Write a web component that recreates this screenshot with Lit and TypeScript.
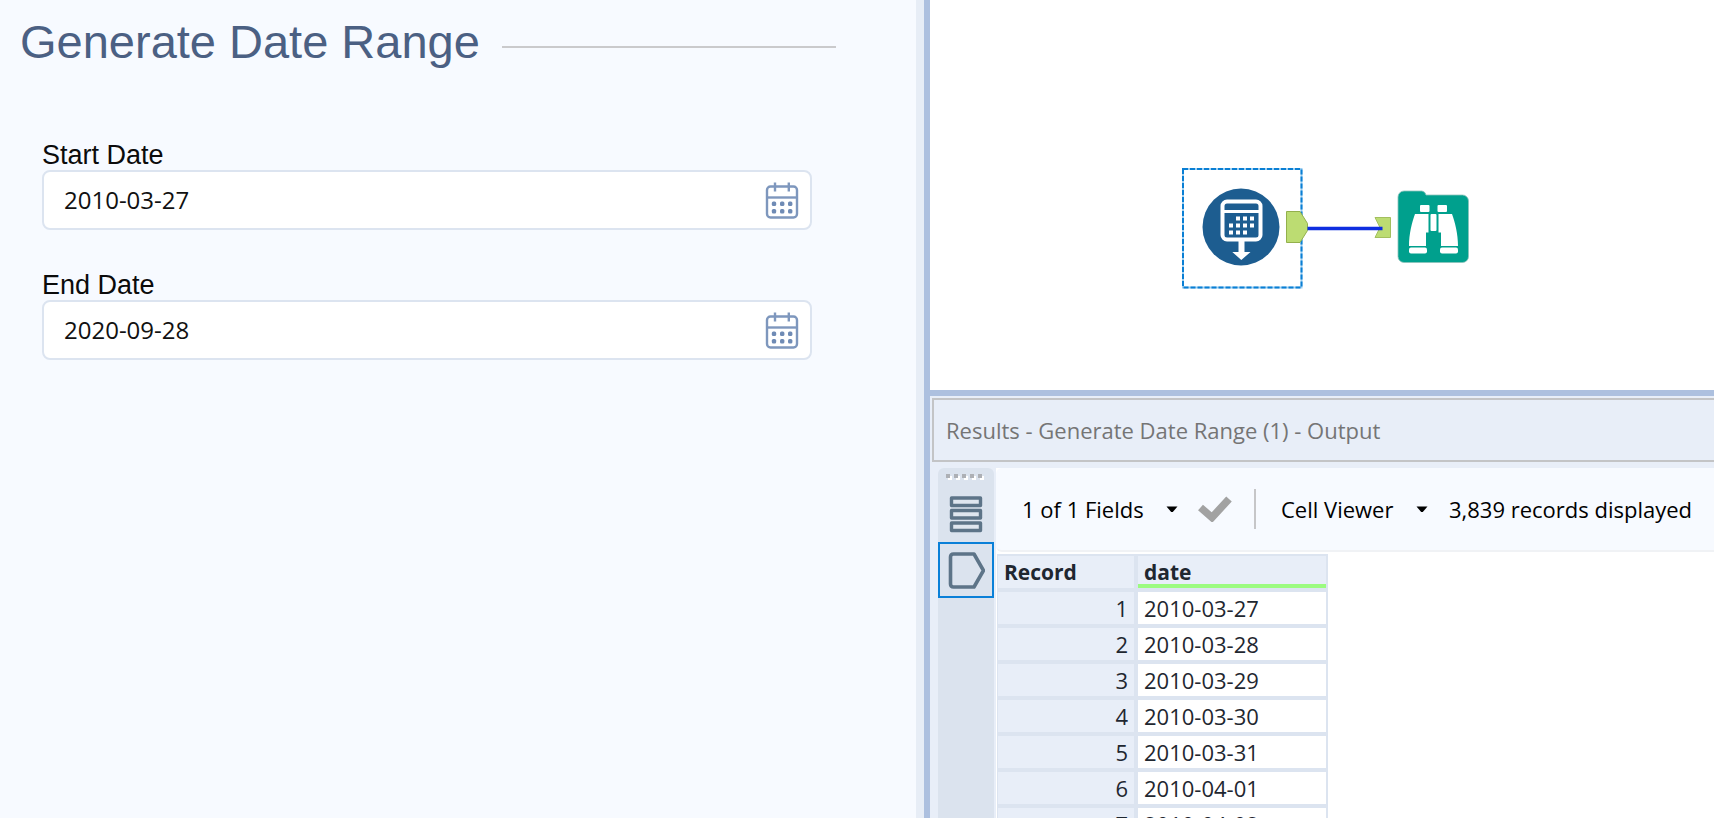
import { LitElement, html, css, svg } from "lit";
import { customElement, property } from "lit/decorators.js";

const caret = html`<svg class="caret" width="12" height="7" viewBox="0 0 12 7" aria-hidden="true">
  <path d="M0.5 0.5h11L6.8 6h-1.6z" fill="#000" />
</svg>`;

@customElement("date-field")
class DateField extends LitElement {
  @property() label = "";
  @property() value = "";

  static styles = css`
    :host {
      display: block;
    }
    label {
      display: block;
      font-size: 27px;
      line-height: 30px;
      color: #0b0b0b;
    }
    .box {
      display: flex;
      align-items: center;
      box-sizing: border-box;
      height: 60px;
      padding: 0 11px 0 20px;
      border: 2px solid #dce4f0;
      border-radius: 8px;
      background: #fff;
    }
    input {
      flex: 1;
      min-width: 0;
      padding: 0;
      border: 0;
      outline: 0;
      background: none;
      font: 24px/32px "Open Sans", "Noto Sans", sans-serif;
      color: #111;
    }
    button {
      display: block;
      padding: 0;
      border: 0;
      background: none;
    }
    svg {
      display: block;
    }
  `;

  render() {
    return html`
      <label for="date">${this.label}</label>
      <div class="box">
        <input id="date" type="text" .value=${this.value} />
        <button type="button" aria-label="Pick ${this.label}">
          <svg width="34" height="38" viewBox="0 0 34 38" fill="none" stroke="#7e97bd" stroke-width="2.400">
            <rect x="2" y="5.500" width="30" height="31" rx="3.500" />
            <path d="M2 16.500h30" />
            <path d="M10 1.500v9M23.800 1.500v9" />
            <g fill="#6f8bb5" stroke="none">
              ${[6.8, 15, 23].map((x) =>
                [20.5, 28].map((y) => svg`<rect x=${x} y=${y} width="4.400" height="4.400" rx="1.500" />`)
              )}
            </g>
          </svg>
        </button>
      </div>
    `;
  }
}

@customElement("config-panel")
class ConfigPanel extends LitElement {
  static styles = css`
    :host {
      display: block;
      background: #f7faff;
    }
    header {
      display: flex;
      align-items: center;
      gap: 22px;
      padding: 14px 80px 0 20px;
    }
    h1 {
      margin: 0;
      font-size: 47px;
      line-height: 56px;
      font-weight: 400;
      white-space: nowrap;
      color: #4b6083;
    }
    .rule {
      flex: 1;
      height: 2px;
      margin-top: 10px;
      background: #cacacc;
    }
    form {
      display: grid;
      gap: 40px;
      padding: 70px 104px 0 42px;
    }
  `;

  render() {
    return html`
      <header>
        <h1>Generate Date Range</h1>
        <div class="rule"></div>
      </header>
      <form>
        <date-field label="Start Date" value="2010-03-27"></date-field>
        <date-field label="End Date" value="2020-09-28"></date-field>
      </form>
    `;
  }
}

@customElement("workflow-canvas")
class WorkflowCanvas extends LitElement {
  static styles = css`
    :host {
      display: block;
      position: relative;
      overflow: hidden;
      background: #fff;
    }
    .flow {
      position: absolute;
      left: 250px;
      top: 166px;
    }
  `;

  render() {
    const dots: [number, number][] = [
      [58, 52.5], [65, 52.5], [72, 52.5],
      [51, 59.5], [58, 59.5], [65, 59.5], [72, 59.5],
      [51, 66.5], [58, 66.5], [65, 66.5],
    ];
    return html`
      <svg class="flow" width="292" height="124" viewBox="0 0 292 124" role="img" aria-label="Generate Date Range connected to Browse">
        <rect x="3" y="3" width="118.500" height="118.500" fill="none" stroke="#9fd0f2" stroke-width="2" />
        <rect x="3" y="3" width="118.500" height="118.500" fill="none" stroke="#0a7fd4" stroke-width="2" stroke-dasharray="5 2" />

        <circle cx="61" cy="61" r="38.500" fill="#1d5d90" />
        <rect x="42.500" y="35.500" width="38" height="38" rx="4.500" fill="none" stroke="#fff" stroke-width="4" />
        <path d="M43 45.500h37" stroke="#fff" stroke-width="3" />
        <g fill="#fff">
          ${dots.map(([x, y]) => svg`<rect x=${x - 2} y=${y - 2} width="4" height="4" />`)}
          <path d="M58.500 73h6v13h6l-9.200 8-9-8h6.200z" />
        </g>

        <path d="M106.500 45.500h13.500l7.500 12v7l-7.500 12h-13.500z" fill="#bcdc72" stroke="#93b04c" />
        <path d="M195 51.500h15.500v20h-15.500l5-10z" fill="#bcdc72" stroke="#a3bf5e" />
        <path d="M127.500 62.500h75" stroke="#0f2fe0" stroke-width="3.600" />

        <path d="M218 31a6 6 0 0 1 6-6h18a5 5 0 0 1 4 4h36.500a6 6 0 0 1 6 6v55.500a6 6 0 0 1-6 6h-58.500a6 6 0 0 1-6-6z" fill="#00a08d" stroke="#8dc3bb" stroke-width="0.800" />
        <g fill="#fff">
          <rect x="240" y="39" width="9.500" height="7" rx="1" />
          <rect x="257.500" y="39" width="9.500" height="7" rx="1" />
          <path d="M235 48h13.500v18.500h-2.500v13.500h-17c0-12 3-24 6-32z" />
          <path d="M272 48h-13.500v18.500h2.500v13.500h17c0-12-3-24-6-32z" />
          <rect x="250.500" y="48" width="6" height="17" rx="1" />
          <rect x="229" y="81.500" width="18" height="6" rx="2" />
          <rect x="260" y="81.500" width="18" height="6" rx="2" />
        </g>
      </svg>
    `;
  }
}

@customElement("results-panel")
class ResultsPanel extends LitElement {
  private rows = [
    "2010-03-27",
    "2010-03-28",
    "2010-03-29",
    "2010-03-30",
    "2010-03-31",
    "2010-04-01",
    "2010-04-02",
  ];

  static styles = css`
    :host {
      display: flex;
      flex-direction: column;
      min-height: 0;
      overflow: hidden;
      background: #e8eef8;
      font-family: "Open Sans", "Noto Sans", sans-serif;
      white-space: nowrap;
    }
    h2 {
      margin: 2px 0 0 2px;
      padding: 0 0 0 12px;
      border: solid #c3c4c6;
      border-width: 2px 0 2px 2px;
      font-size: 22px;
      line-height: 60px;
      font-weight: 400;
      color: #757575;
    }
    .body {
      flex: 1;
      min-height: 0;
      display: grid;
      grid-template-columns: 56px minmax(0, 1fr);
      column-gap: 2px;
      padding: 6px 0 0 8px;
    }
    .side {
      display: flex;
      flex-direction: column;
      border-radius: 6px 6px 0 0;
      background: #dbe3ee;
    }
    .grip {
      height: 18px;
      display: block;
    }
    .side button {
      box-sizing: border-box;
      display: grid;
      place-items: center;
      width: 56px;
      height: 56px;
      padding: 0;
      border: 2px solid transparent;
      background: none;
    }
    .side .on {
      border-color: #0a80d8;
    }
    .main {
      display: flex;
      flex-direction: column;
      overflow: hidden;
      background: #fff;
    }
    .tools {
      display: flex;
      align-items: center;
      flex: none;
      box-sizing: border-box;
      height: 84px;
      padding-left: 26px;
      border-bottom: 2px solid #f0f2f5;
      border-radius: 6px 0 0 6px;
      background: #f7faff;
      font-size: 22px;
      line-height: 32px;
      color: #000;
    }
    .pick {
      display: grid;
      align-items: center;
    }
    .pick > * {
      grid-area: 1 / 1;
    }
    select {
      appearance: none;
      margin: 0;
      padding: 0 34px 0 0;
      border: 0;
      background: none;
      color: inherit;
      font: inherit;
    }
    .caret {
      justify-self: end;
      pointer-events: none;
    }
    .check {
      margin: 0 22px 0 20px;
      padding: 0;
      border: 0;
      background: none;
      line-height: 0;
    }
    .bar {
      width: 2px;
      height: 40px;
      margin-right: 25px;
      background: #c6c6c8;
    }
    .count {
      margin-left: 21px;
    }
    table {
      align-self: flex-start;
      margin: 2px 0 0 1px;
      border-collapse: separate;
      border-spacing: 0;
      border-top: 2px solid #dce4f0;
      border-left: 1px solid #dce4f0;
      font-size: 22px;
      line-height: 32px;
      color: #1f2730;
    }
    th,
    td {
      height: 32px;
      padding: 0 6px;
      border: solid #dce4f0;
      border-width: 0 4px 4px 0;
      text-align: left;
    }
    thead th {
      background: #e8eef8;
      font-size: 21px;
      font-weight: 700;
    }
    .rec {
      box-sizing: border-box;
      width: 140px;
      background: #e8eef8;
    }
    tbody .rec {
      text-align: right;
      font-weight: 400;
    }
    .date {
      box-sizing: border-box;
      width: 190px;
      border-right-width: 2px;
    }
    thead .date {
      box-shadow: inset 0 -4px #9bfb80;
    }
  `;

  render() {
    return html`
      <h2>Results - Generate Date Range (1) - Output</h2>
      <div class="body">
        <div class="side">
          <svg class="grip" width="56" height="18" viewBox="0 0 56 18" aria-hidden="true">
            ${[8, 16, 24, 32, 40].map(
              (x) => svg`<rect x=${x + 2} y="8" width="4" height="4" fill="#fff" /><rect x=${x} y="6" width="4" height="4" fill="#adb0b5" />`
            )}
          </svg>
          <button type="button" aria-label="Messages">
            <svg width="34" height="38" viewBox="0 0 34 38" fill="#dfe6ef" stroke="#5d7488" stroke-width="3.400" stroke-linejoin="round">
              <rect x="2.500" y="3" width="29" height="7.500" />
              <rect x="2.500" y="15.500" width="29" height="7.500" />
              <rect x="2.500" y="28" width="29" height="7.500" />
            </svg>
          </button>
          <button type="button" class="on" aria-label="Output">
            <svg width="38" height="38" viewBox="0 0 38 38" fill="none" stroke="#5d7488" stroke-width="3.600" stroke-linejoin="round">
              <path d="M6.500 3h20.500l9.500 16.500-9.500 16.500h-20.500q-3 0-3-3v-27q0-3 3-3z" />
            </svg>
          </button>
        </div>
        <div class="main">
          <div class="tools">
            <div class="pick">
              <select aria-label="Fields">
                <option>1 of 1 Fields</option>
              </select>
              ${caret}
            </div>
            <button type="button" class="check" aria-label="Apply">
              <svg width="34" height="26" viewBox="0 0 34 26"><path d="M2.500 11.500l11.500 10L31 3" fill="none" stroke="#a2a2a2" stroke-width="7.500" /></svg>
            </button>
            <div class="bar"></div>
            <div class="pick">
              <select aria-label="Viewer">
                <option>Cell Viewer</option>
              </select>
              ${caret}
            </div>
            <span class="count">3,839 records displayed</span>
          </div>
          <table>
            <thead>
              <tr>
                <th class="rec" scope="col">Record</th>
                <th class="date" scope="col">date</th>
              </tr>
            </thead>
            <tbody>
              ${this.rows.map(
                (d, i) => html`<tr>
                  <th class="rec" scope="row">${i + 1}</th>
                  <td class="date">${d}</td>
                </tr>`
              )}
            </tbody>
          </table>
        </div>
      </div>
    `;
  }
}

@customElement("app-root")
class AppRoot extends LitElement {
  static styles = css`
    :host {
      display: grid;
      grid-template-columns: minmax(0, 458fr) 14px minmax(0, 392fr);
      grid-template-rows: minmax(0, 1fr);
      height: 100vh;
      overflow: hidden;
      font-family: "Liberation Sans", Arial, sans-serif;
    }
    .splitter {
      box-sizing: border-box;
      border-right: 6px solid #adc0df;
      background: #e7edf6;
    }
    .right {
      display: grid;
      grid-template-rows: minmax(0, 390fr) 6px minmax(0, 422fr);
      min-width: 0;
      min-height: 0;
    }
    .divider {
      background: #adc0df;
    }
  `;

  render() {
    return html`
      <config-panel></config-panel>
      <div class="splitter"></div>
      <div class="right">
        <workflow-canvas></workflow-canvas>
        <div class="divider"></div>
        <results-panel></results-panel>
      </div>
    `;
  }
}
